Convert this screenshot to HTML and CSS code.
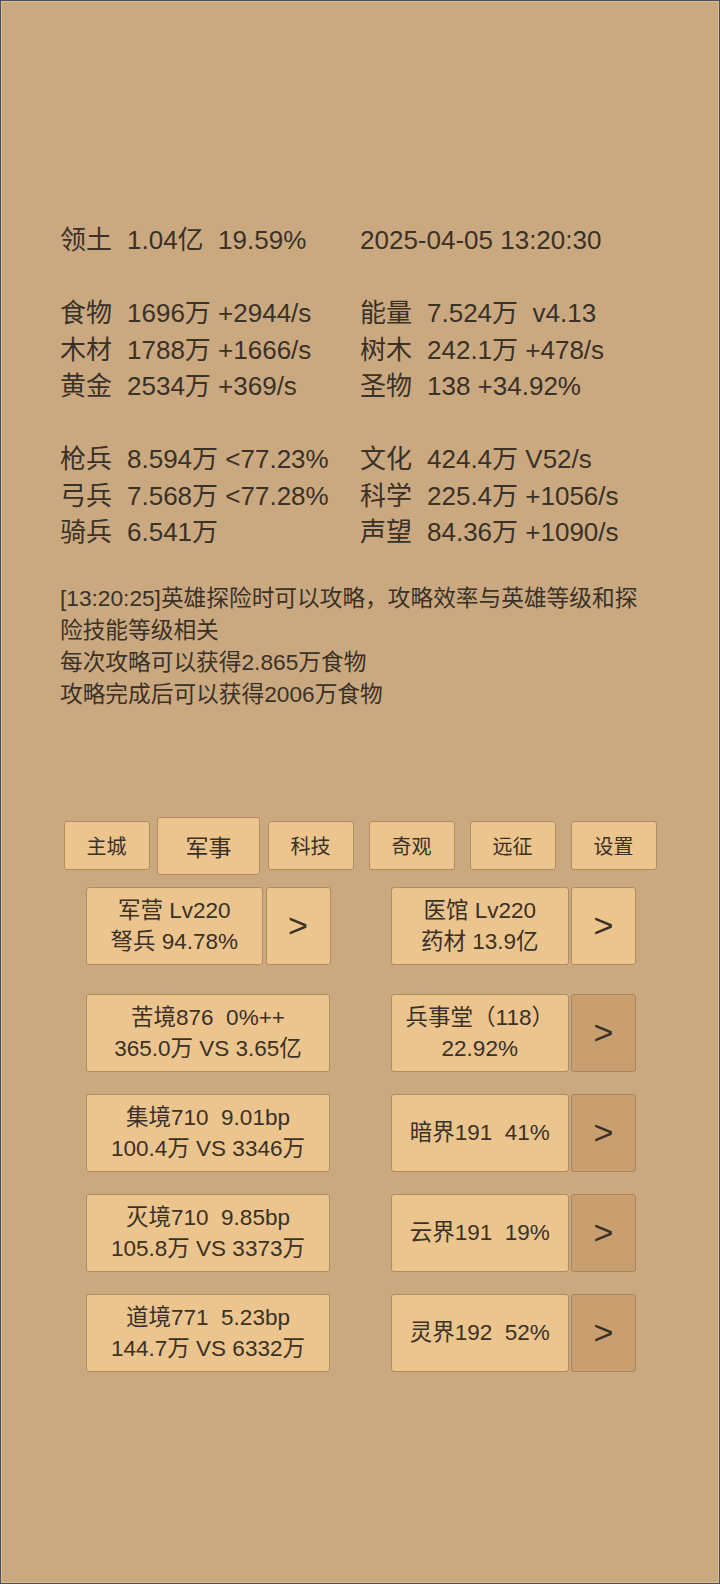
FILE: index.html
```html
<!DOCTYPE html>
<html lang="zh-CN">
<head>
    <meta charset="UTF-8">
    <meta name="viewport" content="width=device-width, initial-scale=1.0">
    <title>领地</title>
    <link rel="stylesheet" href="styles.css">
</head>
<body>
    <div id="screen">
        <div class="stats">
            <div class="cell"><span class="key">领土</span><span class="val">1.04亿  19.59%</span></div>
            <div class="cell"><span class="val">2025-04-05 13:20:30</span></div>
            <div class="blank"></div>
            <div class="cell"><span class="key">食物</span><span class="val">1696万 +2944/s</span></div>
            <div class="cell"><span class="key">能量</span><span class="val">7.524万  v4.13</span></div>
            <div class="cell"><span class="key">木材</span><span class="val">1788万 +1666/s</span></div>
            <div class="cell"><span class="key">树木</span><span class="val">242.1万 +478/s</span></div>
            <div class="cell"><span class="key">黄金</span><span class="val">2534万 +369/s</span></div>
            <div class="cell"><span class="key">圣物</span><span class="val">138 +34.92%</span></div>
            <div class="blank"></div>
            <div class="cell"><span class="key">枪兵</span><span class="val">8.594万 &lt;77.23%</span></div>
            <div class="cell"><span class="key">文化</span><span class="val">424.4万 V52/s</span></div>
            <div class="cell"><span class="key">弓兵</span><span class="val">7.568万 &lt;77.28%</span></div>
            <div class="cell"><span class="key">科学</span><span class="val">225.4万 +1056/s</span></div>
            <div class="cell"><span class="key">骑兵</span><span class="val">6.541万</span></div>
            <div class="cell"><span class="key">声望</span><span class="val">84.36万 +1090/s</span></div>
        </div>

        <div class="log">
            <p>[13:20:25]英雄探险时可以攻略，攻略效率与英雄等级和探险技能等级相关</p>
            <p>每次攻略可以获得2.865万食物</p>
            <p>攻略完成后可以获得2006万食物</p>
        </div>

        <div class="tabs">
            <div class="tabcell"><button class="tab">主城</button></div>
            <div class="tabcell"><button class="tab active">军事</button></div>
            <div class="tabcell"><button class="tab">科技</button></div>
            <div class="tabcell"><button class="tab">奇观</button></div>
            <div class="tabcell"><button class="tab">远征</button></div>
            <div class="tabcell"><button class="tab">设置</button></div>
        </div>

        <div class="panel first">
            <div class="pair">
                <button class="btn main">军营 Lv220<br>弩兵 94.78%</button>
                <button class="btn arrow">&gt;</button>
            </div>
            <div class="pair">
                <button class="btn main">医馆 Lv220<br>药材 13.9亿</button>
                <button class="btn arrow">&gt;</button>
            </div>
        </div>

        <div class="panel">
            <div class="pair">
                <button class="btn wide">苦境876  0%++<br>365.0万 VS 3.65亿</button>
            </div>
            <div class="pair">
                <button class="btn main">兵事堂（118）<br>22.92%</button>
                <button class="btn arrow dark">&gt;</button>
            </div>
            <div class="pair">
                <button class="btn wide">集境710  9.01bp<br>100.4万 VS 3346万</button>
            </div>
            <div class="pair">
                <button class="btn main">暗界191  41%</button>
                <button class="btn arrow dark">&gt;</button>
            </div>
            <div class="pair">
                <button class="btn wide">灭境710  9.85bp<br>105.8万 VS 3373万</button>
            </div>
            <div class="pair">
                <button class="btn main">云界191  19%</button>
                <button class="btn arrow dark">&gt;</button>
            </div>
            <div class="pair">
                <button class="btn wide">道境771  5.23bp<br>144.7万 VS 6332万</button>
            </div>
            <div class="pair">
                <button class="btn main">灵界192  52%</button>
                <button class="btn arrow dark">&gt;</button>
            </div>
        </div>
    </div>
</body>
</html>
```

FILE: styles.css
```css
html, body {
    margin: 0;
    padding: 0;
}

body {
    font-family: "Liberation Sans", "Noto Sans CJK SC", sans-serif;
    color: #3a3127;
    background-color: #caa981;
}

#screen {
    box-sizing: border-box;
    width: 720px;
    height: 1584px;
    padding-top: 221px;
    border: 1px solid #4d5058;
    background-color: #caa981;
    box-shadow: inset 0 0 0 1px rgba(255, 240, 220, 0.25);
}

.stats {
    margin-left: 59px;
    display: grid;
    grid-template-columns: 300px auto;
    grid-auto-rows: 36.5px;
    font-size: 26px;
    line-height: 36.5px;
}

.stats .cell {
    white-space: pre;
}

.stats .key {
    margin-right: 15px;
}

.stats .blank {
    grid-column: 1 / 3;
}

.log {
    margin: 31px 61px 0 59px;
    font-size: 22.7px;
    line-height: 32px;
}

.log p {
    margin: 0;
}

.tabs {
    margin: 107px 0 0 55px;
    width: 608px;
    height: 58px;
    display: grid;
    grid-template-columns: repeat(6, 1fr);
}

.tabcell {
    display: flex;
    align-items: center;
    justify-content: center;
}

button {
    font-family: "Liberation Sans", "Noto Sans CJK SC", sans-serif;
    color: #3a3127;
    cursor: pointer;
    padding: 0;
}

.tab {
    width: 86px;
    height: 49px;
    font-size: 20px;
    background-color: #ebc48e;
    border: 1px solid #b08c60;
    border-radius: 3px;
}

.tab.active {
    width: 103px;
    height: 58px;
    font-size: 23px;
}

.panel {
    margin-left: 55px;
    width: 608px;
    display: grid;
    grid-template-columns: 1fr 1fr;
    row-gap: 22px;
}

.panel.first {
    margin-top: 12px;
    margin-bottom: 29px;
}

.pair {
    display: flex;
    justify-content: center;
    gap: 2.5px;
    height: 78px;
}

.pair:nth-child(even) {
    padding-left: 3px;
}

.btn {
    height: 78px;
    font-size: 22.5px;
    line-height: 31px;
    white-space: pre;
    background-color: #ebc48e;
    border: 1px solid #b08c60;
    border-radius: 3px;
}

.btn.main {
    width: 177.5px;
}

.btn.wide {
    width: 244.5px;
}

.btn.arrow {
    width: 65px;
    font-size: 34px;
    font-weight: 300;
}

.btn.dark {
    background-color: #c99f6f;
    border-color: #a8855b;
}
```
